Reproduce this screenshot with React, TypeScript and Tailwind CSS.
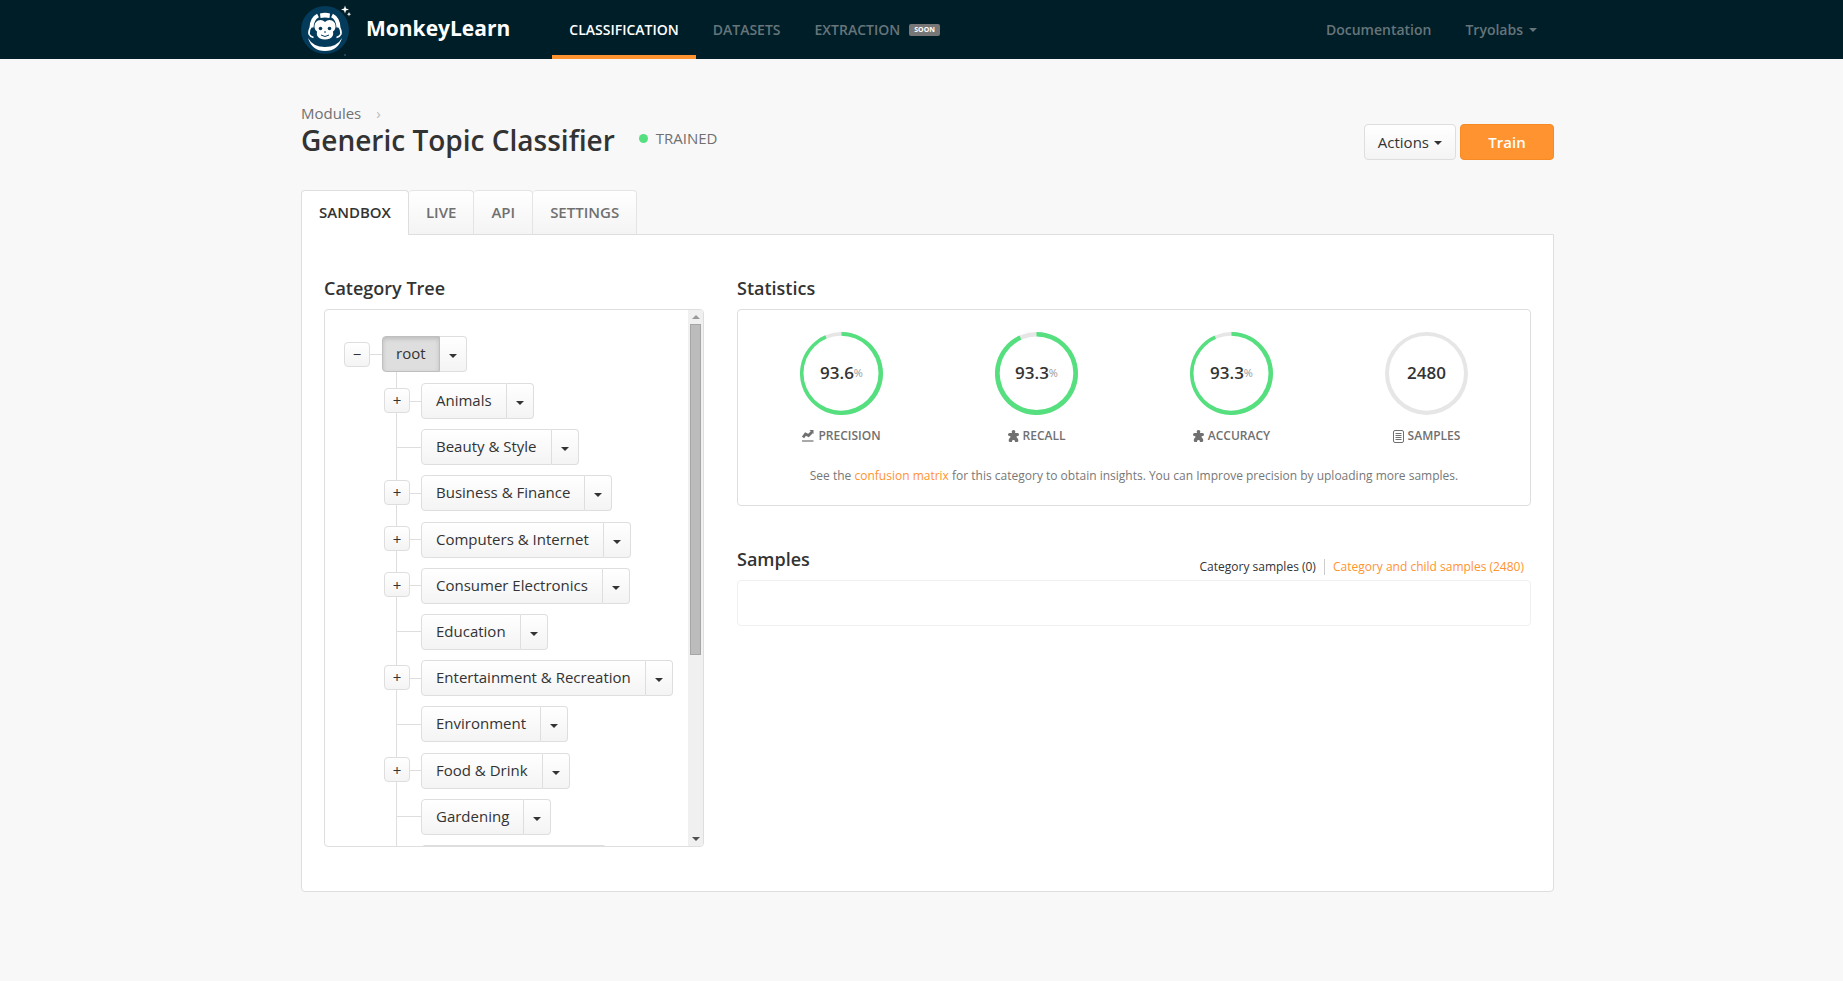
import { useState } from 'react'

const navItems = ['Classification', 'Datasets', 'Extraction']
const tabs = ['Sandbox', 'Live', 'API', 'Settings']

const categories = [
	{ name: 'Animals', children: true },
	{ name: 'Beauty & Style', children: false },
	{ name: 'Business & Finance', children: true },
	{ name: 'Computers & Internet', children: true },
	{ name: 'Consumer Electronics', children: true },
	{ name: 'Education', children: false },
	{ name: 'Entertainment & Recreation', children: true },
	{ name: 'Environment', children: false },
	{ name: 'Food & Drink', children: true },
	{ name: 'Gardening', children: false },
]

const stats = [
	{ label: 'Precision', value: '93.6', percent: 93.6, icon: 'chart', holeX: 41, holeR: 37.5 },
	{ label: 'Recall', value: '93.3', percent: 93.3, icon: 'puzzle', holeX: 41.5, holeR: 36.8 },
	{ label: 'Accuracy', value: '93.3', percent: 93.3, icon: 'puzzle', holeX: 41, holeR: 37.5 },
	{ label: 'Samples', value: '2480', percent: 0, icon: 'list', holeX: 41.5, holeR: 37.5 },
]

const button = 'border border-[#dedede] bg-linear-to-b from-white to-[#f4f4f4] text-[#333]'

function Logo() {
	return (
		<svg width="52" height="56" viewBox="0 0 52 56" aria-hidden="true">
			<circle cx="24" cy="28" r="24" fill="#043a5a" />
			<path d="M19 11.500q5-1.500 10 0l-.5 4.500q-4.500-1-9 0z" fill="#fff" />
			<path
				d="M17 13.500q-6 3-6.500 12M31 13.500q6 3 6.500 12"
				fill="none"
				stroke="#fff"
				strokeWidth="4"
			/>
			<path
				d="M10.500 24q-3 4-2.500 8 1 2.500 4.500 3.500M37.500 24q3 4 2.500 8-1 2.500-4.500 3.500"
				fill="none"
				stroke="#fff"
				strokeWidth="1.600"
			/>
			<path
				d="M24 20q-3-3-7-1.500-4 2-3.500 7 .3 2.500 2.500 4-1 5 3 7 5 2 10 0 4-2 3-7 2.200-1.500 2.500-4 .5-5-3.500-7-4-1.500-7 1.500z"
				fill="#fff"
			/>
			<circle cx="19.500" cy="26.500" r="1.800" fill="#043a5a" />
			<circle cx="28.500" cy="26.500" r="1.800" fill="#043a5a" />
			<path d="M23 30h2M20 33q4 3 8 0" fill="none" stroke="#043a5a" strokeWidth="1" />
			<path d="M7 36q5 9 17 9t17-9q-4 13-17 13T7 36z" fill="#fff" />
			<path
				d="M44 3.500l1 3 3 1-3 1-1 3-1-3-3-1 3-1zM48 10l.6 1.600 1.600.6-1.600.6-.6 1.600-.6-1.600-1.600-.6 1.600-.6z"
				fill="#fff"
			/>
			<circle cx="44" cy="53" r="0.700" fill="#6d8290" />
		</svg>
	)
}

function Caret() {
	return (
		<svg width="8" height="4" viewBox="0 0 8 4" fill="currentColor" aria-hidden="true">
			<path d="M0 0h8L4 4z" />
		</svg>
	)
}

function StatIcon({ name }: { name: string }) {
	if (name === 'chart') {
		return (
			<svg width="12" height="12" viewBox="0 0 12 12" fill="none" stroke="currentColor" aria-hidden="true">
				<path d="M1 7.500L3.500 4 6.500 5.500 10 2" strokeWidth="2.800" />
				<path d="M7.500 0h4v4z" fill="currentColor" stroke="none" />
				<path d="M0 11h11.500" strokeWidth="1.200" />
			</svg>
		)
	}
	if (name === 'puzzle') {
		return (
			<svg width="11" height="12" viewBox="0 0 11 12" fill="currentColor" aria-hidden="true">
				<path d="M4 3q-1-3 1.500-3T7 3h2.500Q11 3 11 4.500T9.500 6Q8.500 6 8.500 7l1.500 2q.8 2-.5 3H7q.3-2-1.500-2T4 12H1.500Q.2 11 1 9l1.500-2q0-1-1-1Q0 6 0 4.500T1.500 3z" />
			</svg>
		)
	}
	return (
		<svg width="11" height="13" viewBox="0 0 11 13" fill="none" stroke="currentColor" aria-hidden="true">
			<rect x="0.500" y="0.500" width="10" height="12" rx="1.500" />
			<path d="M2.500 3.500h6M2.500 5.500h6M2.500 7.500h6M2.500 9.500h6" />
		</svg>
	)
}

function Ring({ percent, holeX, holeR }: { percent: number; holeX: number; holeR: number }) {
	const angle = (percent / 100) * Math.PI * 2
	const x = 41.5 + 41.5 * Math.sin(angle)
	const y = 41.5 - 41.5 * Math.cos(angle)
	return (
		<svg width="83" height="83" viewBox="0 0 83 83" className="col-start-1 row-start-1" aria-hidden="true">
			<circle cx="41.500" cy="41.500" r="41.500" fill="#e6e6e6" />
			{percent > 0 && <path d={`M41.500 41.500V0A41.500 41.500 0 1 1 ${x} ${y}z`} fill="#56df7f" />}
			<circle cx={holeX} cy="41.200" r={holeR} fill="#fff" />
		</svg>
	)
}

function TreeNode({ name, active = false }: { name: string; active?: boolean }) {
	return (
		<div className="flex h-9 shrink-0">
			<button
				className={
					active
						? 'rounded-l border border-[#bfbfbf] bg-[#dedede] px-[13px] pb-[2px] text-[15px] leading-5 text-[#333] shadow-[inset_0_2px_4px_rgba(0,0,0,0.150)]'
						: `rounded-l px-[14px] pb-[2px] text-[15px] leading-5 whitespace-nowrap ${button}`
				}
			>
				{name}
			</button>
			<button
				aria-label={`${name} options`}
				className={`flex w-[27px] items-center justify-center rounded-r border-l-0 pt-1 ${button}`}
			>
				<Caret />
			</button>
		</div>
	)
}

function Toggle({ open, name }: { open: boolean; name: string }) {
	return (
		<button
			aria-label={`${open ? 'Collapse' : 'Expand'} ${name}`}
			className={`flex h-[25px] w-[26px] shrink-0 items-center justify-center rounded text-[15px] leading-5 ${button}`}
		>
			{open ? '−' : '+'}
		</button>
	)
}

function CategoryTree() {
	return (
		<section className="w-[380px] shrink-0">
			<h2 className="text-[18px] leading-6 font-semibold">Category Tree</h2>
			<div className="mt-[9px] flex h-[538px] overflow-hidden rounded border border-[#dedede]">
				<div className="flex-1 overflow-hidden pt-[26px] pl-[19px]">
					<div className="flex items-center">
						<Toggle open name="root" />
						<span className="h-px w-3 bg-[#dedede]" />
						<TreeNode name="root" active />
					</div>
					<div className="ml-[52px] border-l border-[#dedede] pt-[11px]">
						<ul className="flex h-[498px] flex-col justify-between">
							{categories.map((category) => (
								<li key={category.name} className="flex items-center">
									{category.children && (
										<div className="-ml-[13px] pb-[2px]">
											<Toggle open={false} name={category.name} />
										</div>
									)}
									<span className={`h-px bg-[#dedede] ${category.children ? 'w-[11px]' : 'w-6'}`} />
									<TreeNode name={category.name} />
								</li>
							))}
							<li className={`ml-6 h-9 w-[186px] rounded ${button}`} />
						</ul>
					</div>
				</div>
				{/* Scrollbar */}
				<div className="flex w-[15px] flex-col items-center bg-[#f0f0f0]" aria-hidden="true">
					<div className="flex h-[14px] rotate-180 items-center text-[#999]">
						<Caret />
					</div>
					<div className="h-[331px] w-[11px] border border-[#a6a6a6] bg-[#bcbcbc]" />
					<div className="mt-auto flex h-[14px] items-center text-[#505050]">
						<Caret />
					</div>
				</div>
			</div>
		</section>
	)
}

function Statistics() {
	return (
		<section>
			<h2 className="text-[18px] leading-6 font-semibold">Statistics</h2>
			<div className="mt-[9px] h-[197px] rounded border border-[#dedede] px-[6px] pt-[22px]">
				<div className="grid grid-cols-4">
					{stats.map((stat) => (
						<div key={stat.label} className="flex flex-col items-center">
							<div className="grid place-items-center">
								<Ring percent={stat.percent} holeX={stat.holeX} holeR={stat.holeR} />
								<span className="col-start-1 row-start-1 flex items-center pb-[2px] text-[17px] leading-5 font-semibold">
									{stat.value}
									{stat.percent > 0 && (
										<small className="text-[11px] font-normal text-[#999]">%</small>
									)}
								</span>
							</div>
							<div className="mt-[11px] flex items-center gap-1 text-[12px] leading-5 font-semibold text-[#707070] uppercase">
								<StatIcon name={stat.icon} />
								{stat.label}
							</div>
						</div>
					))}
				</div>
				<p className="mt-5 text-center text-[12px] leading-5 text-[#777]">
					See the{' '}
					<a href="#confusion-matrix" className="text-[#ff9330]">
						confusion matrix
					</a>{' '}
					for this category to obtain insights. You can Improve precision by uploading more samples.
				</p>
			</div>
		</section>
	)
}

function Samples() {
	return (
		<section className="mt-[41px]">
			<div className="flex items-start justify-between">
				<h2 className="text-[18px] leading-6 font-semibold">Samples</h2>
				<div className="mt-[10px] flex items-center gap-2 pr-[7px] text-[12px] leading-5">
					<a href="#category">Category samples (0)</a>
					<span className="h-4 w-px bg-[#ccc]" />
					<a href="#children" className="text-[#ff9330]">
						Category and child samples (2480)
					</a>
				</div>
			</div>
			<div className="mt-[3px] h-[46px] rounded border border-[#f0f0f0]" />
		</section>
	)
}

export default function App() {
	const [activeTab, setActiveTab] = useState('Sandbox')

	return (
		<div className="min-h-screen bg-[#f8f8f8] pb-10 font-['Open_Sans',sans-serif] text-[#333]">
			<header className="bg-[#001e28]">
				<div className="mx-auto flex h-[59px] max-w-[1265px] pl-3">
					<a href="#home" className="flex items-center">
						<Logo />
						<span className="ml-[13px] pb-1 text-[21px] leading-7 font-bold text-white">MonkeyLearn</span>
					</a>
					<nav className="ml-[42px] flex text-[14px] leading-5 font-semibold uppercase">
						{navItems.map((item) => (
							<a
								key={item}
								href={`#${item}`}
								className={
									item === 'Classification'
										? 'flex items-center border-b-4 border-[#ff9330] px-[17px] pt-1 text-white'
										: 'flex items-center px-[17px] text-[#66757a]'
								}
							>
								{item}
								{item === 'Extraction' && (
									<span className="ml-[9px] rounded-xs bg-[#777] px-[5px] text-[7px] leading-3 font-bold text-white">
										Soon
									</span>
								)}
							</a>
						))}
					</nav>
					<div className="ml-auto flex text-[14px] leading-5 font-semibold text-[#66757a]">
						<a href="#docs" className="flex items-center px-[17px]">
							Documentation
						</a>
						<button className="flex items-center gap-[6px] px-[17px]">
							Tryolabs
							<Caret />
						</button>
					</div>
				</div>
			</header>

			<main className="mx-auto max-w-[1265px] pt-[44px] pl-3">
				<div className="flex items-start justify-between">
					<div>
						<div className="flex gap-[15px] text-[15px] leading-5 text-[#707070]">
							<a href="#modules">Modules</a>
							<span className="text-[#bbb]">›</span>
						</div>
						<div className="flex items-center">
							<h1 className="pb-px text-[28px] leading-[34px] font-semibold">Generic Topic Classifier</h1>
							<div className="ml-6 flex items-center gap-2 pb-[6px] text-[15px] leading-5 text-[#707070]">
								<span className="mt-[2px] h-[9px] w-[9px] rounded-full bg-[#56df7f]" />
								TRAINED
							</div>
						</div>
					</div>
					<div className="mt-[21px] flex gap-1">
						<button
							className={`flex h-9 items-center gap-[5px] rounded px-[13px] pb-px text-[15px] leading-5 ${button}`}
						>
							Actions
							<span className="pt-[2px]">
								<Caret />
							</span>
						</button>
						<button className="h-9 w-[94px] rounded border border-[#f88a23] bg-[#ff9330] pb-px text-[15px] leading-5 font-semibold text-white">
							Train
						</button>
					</div>
				</div>

				<div className="mt-[30px] flex" role="tablist">
					{tabs.map((tab) => (
						<button
							key={tab}
							role="tab"
							aria-selected={activeTab === tab}
							onClick={() => setActiveTab(tab)}
							className={
								activeTab === tab
									? 'z-10 -mb-px h-[45px] rounded-t border border-b-0 border-[#dedede] bg-white px-[17px] pb-[3px] text-[15px] leading-5 font-semibold uppercase'
									: 'h-11 rounded-t border border-b-0 border-l-0 border-[#e4e4e4] bg-linear-to-b from-white to-[#f4f4f4] px-[17px] pb-[2px] text-[15px] leading-5 font-semibold text-[#707070] uppercase'
							}
						>
							{tab}
						</button>
					))}
				</div>
				<div className="flex min-h-[658px] gap-[33px] rounded-b border border-[#dedede] bg-white pt-[41px] pr-[22px] pb-[44px] pl-[22px]">
					<CategoryTree />
					<div className="min-w-0 flex-1">
						<Statistics />
						<Samples />
					</div>
				</div>
			</main>
		</div>
	)
}
